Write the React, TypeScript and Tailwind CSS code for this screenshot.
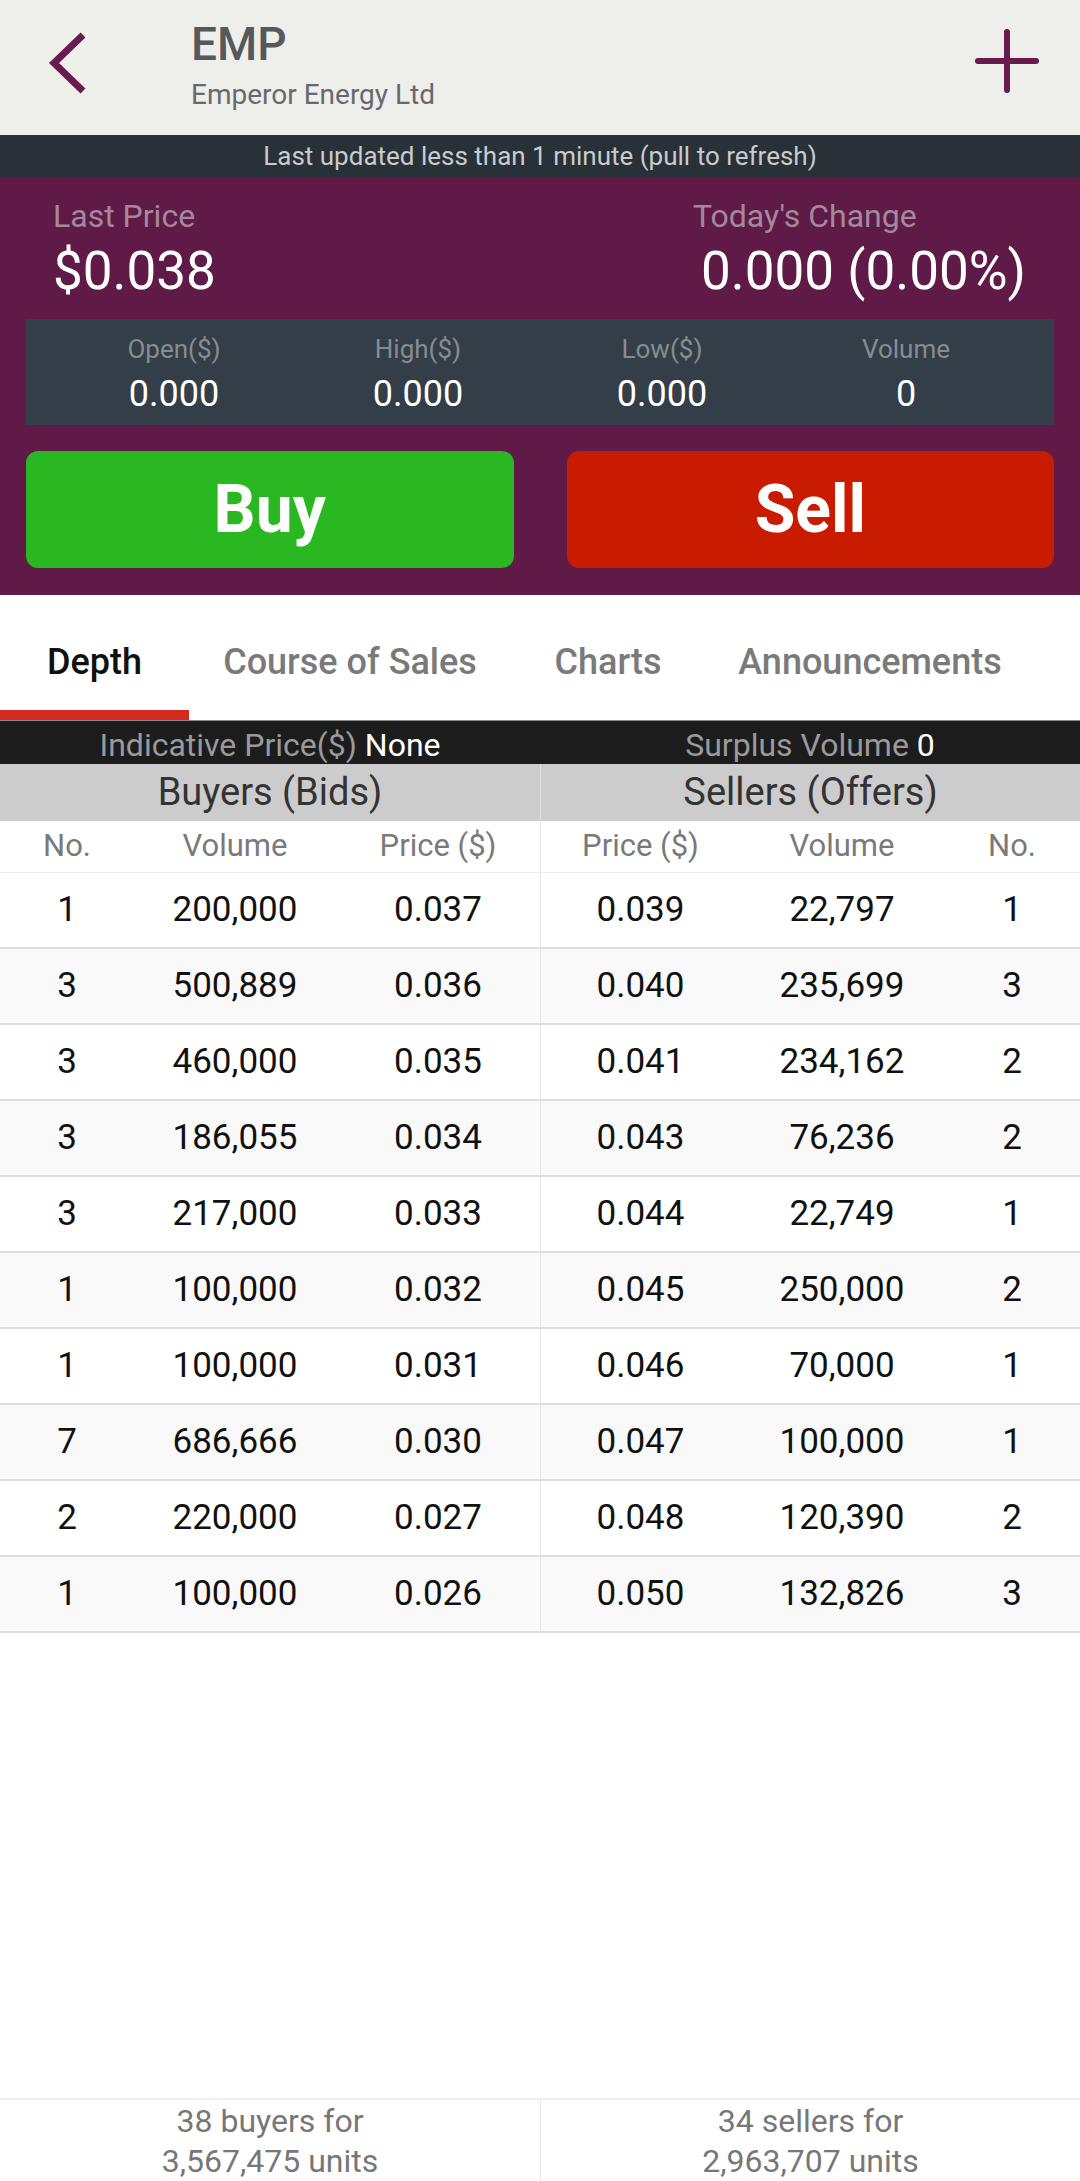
const bids = [
  ['1', '200,000', '0.037'],
  ['3', '500,889', '0.036'],
  ['3', '460,000', '0.035'],
  ['3', '186,055', '0.034'],
  ['3', '217,000', '0.033'],
  ['1', '100,000', '0.032'],
  ['1', '100,000', '0.031'],
  ['7', '686,666', '0.030'],
  ['2', '220,000', '0.027'],
  ['1', '100,000', '0.026'],
]

const offers = [
  ['0.039', '22,797', '1'],
  ['0.040', '235,699', '3'],
  ['0.041', '234,162', '2'],
  ['0.043', '76,236', '2'],
  ['0.044', '22,749', '1'],
  ['0.045', '250,000', '2'],
  ['0.046', '70,000', '1'],
  ['0.047', '100,000', '1'],
  ['0.048', '120,390', '2'],
  ['0.050', '132,826', '3'],
]

const stats = [
  { label: 'Open($)', value: '0.000' },
  { label: 'High($)', value: '0.000' },
  { label: 'Low($)', value: '0.000' },
  { label: 'Volume', value: '0' },
]

const tabs = [
  { label: 'Depth', width: 'w-[189px]', active: true },
  { label: 'Course of Sales', width: 'w-[322px]' },
  { label: 'Charts', width: 'w-[194px]' },
  { label: 'Announcements', width: 'w-[330px]' },
]

const cols = 'grid grid-cols-[134px_202px_204px_200px_204px_136px]'

function Header() {
  return (
    <div className="flex h-[135px] items-start bg-[#eeeeea]">
      <div className="flex w-[191px] justify-start pt-[30px] pl-[46px]">
        <svg width="46" height="66" viewBox="0 0 46 66" fill="none">
          <path d="M37 5 L8 33 L37 61" stroke="#6a1b4d" strokeWidth="7" />
        </svg>
      </div>
      <div className="flex-1 pt-[18px]">
        <div className="text-[46px] font-medium leading-[52px] text-[#55595d]">EMP</div>
        <div className="mt-[8px] text-[28px] leading-[34px] text-[#666a6e]">Emperor Energy Ltd</div>
      </div>
      <div className="pt-[28px] pr-[40px]">
        <svg width="66" height="66" viewBox="0 0 66 66" fill="none">
          <path d="M33 4 V62 M4 33 H62" stroke="#6a1b4d" strokeWidth="6" strokeLinecap="round" />
        </svg>
      </div>
    </div>
  )
}

function PricePanel() {
  return (
    <div className="bg-[#601a48] px-[26px] pt-[20px] pb-[27px]">
      <div className="flex">
        <div className="flex-1 pl-[27px]">
          <div className="text-[32px] leading-[36px] text-[#a3899a]">Last Price</div>
          <div className="mt-[6px] text-[53px] leading-[62px] text-white">$0.038</div>
        </div>
        <div className="mr-[28px] w-[333px]">
          <div className="text-[32px] leading-[36px] text-[#a3899a]">Today's Change</div>
          <div className="mt-[6px] text-right text-[53px] leading-[62px] text-white">0.000 (0.00%)</div>
        </div>
      </div>
      <div className="mt-[17px] grid grid-cols-4 bg-[#333e48] px-[26px] pt-[15px] pb-[11px]">
        {stats.map((s) => (
          <div key={s.label} className="text-center">
            <div className="text-[26px] leading-[30px] text-[#878c91]">{s.label}</div>
            <div className="mt-[10px] text-[36px] leading-[40px] text-white">{s.value}</div>
          </div>
        ))}
      </div>
      <div className="mt-[26px] flex gap-[53px]">
        <button className="flex h-[117px] flex-1 items-center justify-center rounded-[12px] bg-[#29b722] text-[66px] font-bold text-white">
          Buy
        </button>
        <button className="flex h-[117px] flex-1 items-center justify-center rounded-[12px] bg-[#c81b00] text-[66px] font-bold text-white">
          Sell
        </button>
      </div>
    </div>
  )
}

function Tabs() {
  return (
    <div className="flex h-[126px] border-b border-[#8a8a8a] bg-white">
      {tabs.map((t) => (
        <div key={t.label} className={`${t.width} relative flex items-center justify-center pt-[8px]`}>
          <span className={`text-[36px] font-medium ${t.active ? 'text-[#111]' : 'text-[#7a7a7a]'}`}>{t.label}</span>
          {t.active && <div className="absolute right-0 bottom-0 left-0 h-[10px] bg-[#d52b1e]" />}
        </div>
      ))}
    </div>
  )
}

export default function App() {
  return (
    <div
      className="flex h-[2181px] w-[1080px] flex-col overflow-hidden bg-white"
      style={{ fontFamily: 'Roboto, "Liberation Sans", sans-serif' }}
    >
      <Header />
      <div className="flex h-[43px] items-center justify-center bg-[#283038] text-[26px] text-[#c9cbcd]">
        Last updated less than 1 minute (pull to refresh)
      </div>
      <PricePanel />
      <Tabs />
      <div className="grid h-[43px] grid-cols-2 items-center bg-[#1c1c1c] text-[32px]">
        <div className="text-center">
          <span className="text-[#9a9a9a]">Indicative Price($)</span> <span className="text-white">None</span>
        </div>
        <div className="text-center">
          <span className="text-[#9a9a9a]">Surplus Volume</span> <span className="text-white">0</span>
        </div>
      </div>
      <div className="grid h-[57px] grid-cols-2 bg-[#cccccc] text-[38px] text-[#333]">
        <div className="flex items-center justify-center">Buyers (Bids)</div>
        <div className="flex items-center justify-center border-l border-[#e0e0e0]">Sellers (Offers)</div>
      </div>
      <div className={`${cols} h-[52px] items-center border-b border-[#ececec] text-center text-[31px] text-[#7a7a7a]`}>
        <div>No.</div>
        <div>Volume</div>
        <div>Price ($)</div>
        <div className="flex h-full items-center justify-center border-l border-[#e6e6e6]">Price ($)</div>
        <div>Volume</div>
        <div>No.</div>
      </div>
      {bids.map((b, i) => (
        <div
          key={i}
          className={`${cols} h-[76px] border-b-2 border-[#dedede] text-center text-[35px] text-[#111] ${i % 2 === 1 ? 'bg-[#f9f9f9]' : 'bg-white'}`}
        >
          <div className="flex items-center justify-center">{b[0]}</div>
          <div className="flex items-center justify-center">{b[1]}</div>
          <div className="flex items-center justify-center">{b[2]}</div>
          <div className="flex items-center justify-center border-l border-[#e6e6e6]">{offers[i][0]}</div>
          <div className="flex items-center justify-center">{offers[i][1]}</div>
          <div className="flex items-center justify-center">{offers[i][2]}</div>
        </div>
      ))}
      <div className="flex-1" />
      <div className="grid h-[83px] shrink-0 grid-cols-2 border-t-2 border-[#f0f0f0] text-center text-[32px] leading-[40px] text-[#777]">
        <div className="pt-[1px]">
          <div>38 buyers for</div>
          <div>3,567,475 units</div>
        </div>
        <div className="border-l border-[#e6e6e6] pt-[1px]">
          <div>34 sellers for</div>
          <div>2,963,707 units</div>
        </div>
      </div>
    </div>
  )
}
